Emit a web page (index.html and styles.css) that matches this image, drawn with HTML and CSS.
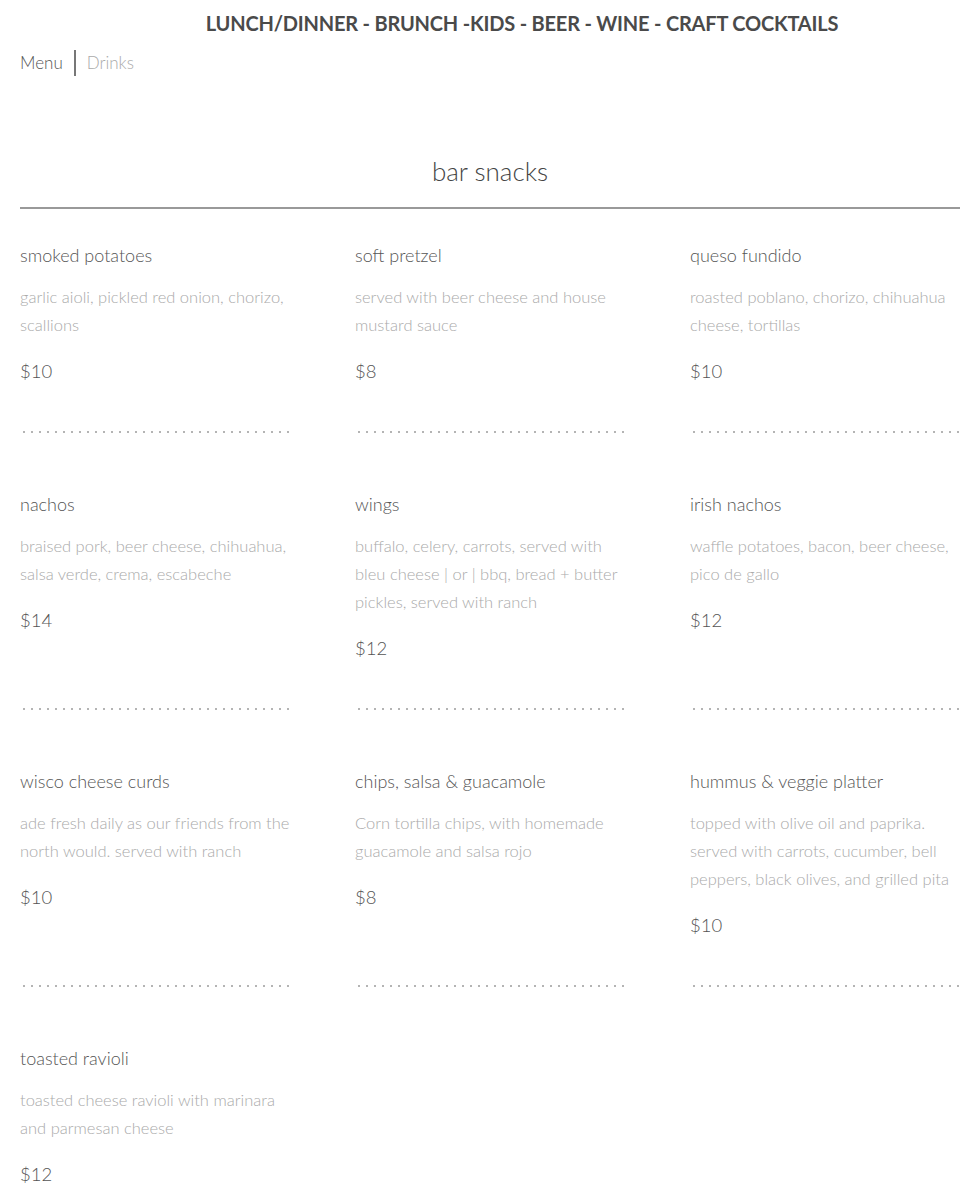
FILE: index.html
```html
<!DOCTYPE html>
<html>
<head>
<meta charset="utf-8">
<link rel="stylesheet" href="styles.css">
</head>
<body>
<header class="top">
  <h1 class="top-title">LUNCH/DINNER - BRUNCH -KIDS - BEER - WINE - CRAFT COCKTAILS</h1>
  <nav class="tabs">
    <span class="tab active">Menu</span>
    <span class="tab-sep"></span>
    <span class="tab">Drinks</span>
  </nav>
</header>
<main class="menu">
  <h2 class="section-title">bar snacks</h2>
  <div class="items">
    <div class="item">
      <div class="name">smoked potatoes</div>
      <div class="desc">garlic aioli, pickled red onion, chorizo, scallions</div>
      <div class="price">$10</div>
      <div class="dots"></div>
    </div>
    <div class="item">
      <div class="name">soft pretzel</div>
      <div class="desc">served with beer cheese and house mustard sauce</div>
      <div class="price">$8</div>
      <div class="dots"></div>
    </div>
    <div class="item">
      <div class="name">queso fundido</div>
      <div class="desc">roasted poblano, chorizo, chihuahua cheese, tortillas</div>
      <div class="price">$10</div>
      <div class="dots"></div>
    </div>
    <div class="item">
      <div class="name">nachos</div>
      <div class="desc">braised pork, beer cheese, chihuahua, salsa verde, crema, escabeche</div>
      <div class="price">$14</div>
      <div class="dots"></div>
    </div>
    <div class="item">
      <div class="name">wings</div>
      <div class="desc">buffalo, celery, carrots, served with bleu cheese | or | bbq, bread + butter pickles, served with ranch</div>
      <div class="price">$12</div>
      <div class="dots"></div>
    </div>
    <div class="item">
      <div class="name">irish nachos</div>
      <div class="desc">waffle potatoes, bacon, beer cheese, pico de gallo</div>
      <div class="price">$12</div>
      <div class="dots"></div>
    </div>
    <div class="item">
      <div class="name">wisco cheese curds</div>
      <div class="desc">ade fresh daily as our friends from the north would. served with ranch</div>
      <div class="price">$10</div>
      <div class="dots"></div>
    </div>
    <div class="item">
      <div class="name">chips, salsa &amp; guacamole</div>
      <div class="desc">Corn tortilla chips, with homemade guacamole and salsa rojo</div>
      <div class="price">$8</div>
      <div class="dots"></div>
    </div>
    <div class="item">
      <div class="name">hummus &amp; veggie platter</div>
      <div class="desc">topped with olive oil and paprika. served with carrots, cucumber, bell peppers, black olives, and grilled pita</div>
      <div class="price">$10</div>
      <div class="dots"></div>
    </div>
    <div class="item">
      <div class="name">toasted ravioli</div>
      <div class="desc">toasted cheese ravioli with marinara and parmesan cheese</div>
      <div class="price">$12</div>
      <div class="dots"></div>
    </div>
  </div>
</main>
</body>
</html>
```
FILE: styles.css
```css
html, body {
  margin: 0;
  padding: 0;
  background: #fff;
}
body {
  font-family: "Lato", "Noto Sans", sans-serif;
  font-weight: 300;
  color: #555;
  padding: 0 5px 0 20px;
  overflow: hidden;
  height: 1190px;
}
.top-title {
  margin: 0;
  padding-top: 10px;
  padding-left: 64px;
  text-align: center;
  font-family: "Lato", "Open Sans", sans-serif;
  font-weight: 700;
  font-size: 20px;
  line-height: 26px;
  color: #4a4a4a;
  letter-spacing: -0.2px;
}
.tabs {
  display: flex;
  align-items: center;
  margin-top: 14px;
  height: 26px;
}
.tab {
  font-size: 17px;
  line-height: 26px;
  color: #aaa;
}
.tab.active {
  color: #555;
}
.tab-sep {
  width: 2px;
  height: 26px;
  background: #777;
  margin: 0 11px 0 11px;
}
.section-title {
  margin: 78px 0 0 0;
  text-align: center;
  font-weight: 300;
  font-size: 26px;
  line-height: 34px;
  color: #444;
  padding-bottom: 19px;
  border-bottom: 2px solid #999;
}
.items {
  display: grid;
  grid-template-columns: repeat(3, 270px);
  column-gap: 65px;
  row-gap: 59px;
  margin-top: 34px;
}
.item {
  display: flex;
  flex-direction: column;
}
.name {
  font-size: 18px;
  line-height: 24px;
  color: #555;
}
.desc {
  margin-top: 16px;
  font-size: 16.5px;
  line-height: 28px;
  color: #aaa;
}
.price {
  margin-top: 20px;
  font-size: 18.5px;
  line-height: 24px;
  color: #555;
}
.dots {
  margin-top: auto;
  padding-top: 48px;
  height: 2px;
  background-image: radial-gradient(circle, #b4b4b4 1px, transparent 1.3px);
  background-size: 8px 2px;
  background-repeat: repeat-x;
  background-position: 0 100%;
  background-clip: content-box;
  box-sizing: content-box;
}
```
